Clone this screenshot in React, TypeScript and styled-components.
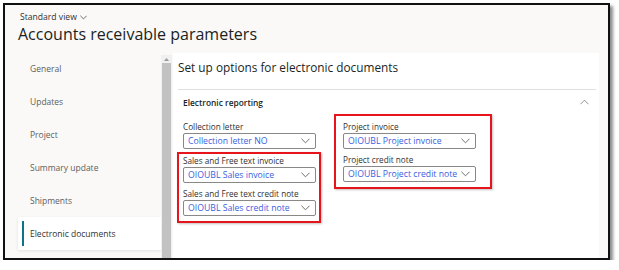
import React from "react";
import styled, { createGlobalStyle } from "styled-components";

const Global = createGlobalStyle`
  html, body { margin: 0; padding: 0; background: #ffffff; }
  body { font-family: "Open Sans", "Noto Sans", sans-serif; color: #323130; }
  * { box-sizing: border-box; }
`;

const Frame = styled.div`
  margin: 3px 0 0 3px;
  width: 607px;
  height: 257px;
  border: 2px solid #111;
  background: #faf9f8;
  box-shadow: 3px 3px 3px rgba(0, 0, 0, 0.45);
  display: flex;
  flex-direction: column;
  overflow: hidden;
`;

const Header = styled.div`
  height: 47px;
  padding: 6px 0 0 13px;
  display: flex;
  flex-direction: column;
`;

const ViewPicker = styled.div`
  display: flex;
  align-items: center;
  gap: 3px;
  padding-left: 2px;
  font-size: 8.6px;
  line-height: 12px;
  color: #323130;
`;

const PageTitle = styled.h1`
  margin: 0;
  font-size: 16px;
  line-height: 22px;
  font-weight: 400;
  color: #201f1e;
`;

const Body = styled.div`
  flex: 1;
  display: flex;
  min-height: 0;
`;

const Nav = styled.nav`
  width: 156px;
  padding-left: 13px;
  display: flex;
  flex-direction: column;
`;

const NavItem = styled.div<{ $active?: boolean }>`
  height: 33px;
  display: flex;
  align-items: center;
  padding-left: 4px;
  gap: 6px;
  font-size: 8.5px;
  color: ${(p) => (p.$active ? "#323130" : "#605e5c")};
  background: ${(p) => (p.$active ? "#ffffff" : "transparent")};
  box-shadow: ${(p) => (p.$active ? "0 1px 3px rgba(0,0,0,0.10)" : "none")};
`;

const NavBar = styled.span<{ $active?: boolean }>`
  width: 2px;
  height: 25px;
  background: ${(p) => (p.$active ? "#0e7387" : "transparent")};
`;

const Scroll = styled.div`
  width: 11px;
  margin-top: 3px;
  display: flex;
  flex-direction: column;
  background: #f0f0f0;
`;

const ScrollArrow = styled.div`
  height: 8px;
  display: flex;
  align-items: center;
  justify-content: center;
`;

const ScrollThumb = styled.div`
  flex: 1;
  margin: 0 1px;
  background: #c2c2c2;
`;

const Content = styled.main`
  width: 426px;
  margin: 1px 0 0 1px;
  background: #ffffff;
  padding: 4px 3px 0 5px;
  display: flex;
  flex-direction: column;
`;

const SectionTitle = styled.h2`
  margin: 0;
  font-size: 11.8px;
  line-height: 20px;
  font-weight: 400;
  color: #201f1e;
`;

const Divider = styled.div`
  margin-top: 12px;
  height: 1px;
  background: #e1dfdd;
`;

const GroupHeader = styled.div`
  margin-top: 5px;
  padding: 0 7px 0 5px;
  height: 14px;
  display: flex;
  align-items: center;
  justify-content: space-between;
  font-size: 8.4px;
  font-weight: 600;
  color: #201f1e;
`;

const Columns = styled.div`
  margin-top: 5px;
  padding-left: 5px;
  display: flex;
  gap: 27px;
  align-items: flex-start;
`;

const Column = styled.div<{ $pad?: number }>`
  width: 133px;
  padding-top: ${(p) => p.$pad ?? 0}px;
  display: flex;
  flex-direction: column;
`;

const Highlight = styled.div<{ $ml: number; $pt: number; $pl: number; $pr: number; $mt?: number }>`
  margin-left: ${(p) => p.$ml}px;
  margin-top: ${(p) => p.$mt ?? 0}px;
  width: ${(p) => 133 + p.$pl + p.$pr + 4}px;
  border: 2px solid #e8141b;
  padding: ${(p) => p.$pt}px ${(p) => p.$pr}px 5px ${(p) => p.$pl}px;
  box-shadow: 1px 1px 2px rgba(0, 0, 0, 0.25);
  display: flex;
  flex-direction: column;
  gap: 4px;
`;

const Field = styled.div`
  display: flex;
  flex-direction: column;
`;

const Label = styled.div`
  font-size: 8.2px;
  line-height: 13px;
  color: #323130;
  white-space: nowrap;
`;

const Select = styled.div`
  height: 16px;
  border: 1px solid #8a8886;
  border-radius: 2px;
  display: flex;
  align-items: center;
  justify-content: space-between;
  padding: 0 5px 0 4px;
  font-size: 8.7px;
  color: #3b5ee0;
  white-space: nowrap;
  background: #fff;
`;

const Chevron = ({ up, color = "#605e5c", w = 9 }: { up?: boolean; color?: string; w?: number }) => (
  <svg width={w} height={Math.round(w / 2) + 1} viewBox="0 0 10 6" fill="none">
    <path
      d={up ? "M0.5 5.5 L5 1 L9.5 5.5" : "M0.5 0.5 L5 5 L9.5 0.5"}
      stroke={color}
      strokeWidth="1"
    />
  </svg>
);

const SelectField = ({ label, value }: { label: string; value: string }) => (
  <Field>
    <Label>{label}</Label>
    <Select>
      <span>{value}</span>
      <Chevron />
    </Select>
  </Field>
);

const navItems = [
  "General",
  "Updates",
  "Project",
  "Summary update",
  "Shipments",
  "Electronic documents",
];

export default function App() {
  return (
    <>
      <Global />
      <Frame>
        <Header>
          <ViewPicker>
            Standard view <Chevron w={7} color="#323130" />
          </ViewPicker>
          <PageTitle>Accounts receivable parameters</PageTitle>
        </Header>
        <Body>
          <Nav>
            {navItems.map((n, i) => {
              const active = i === navItems.length - 1;
              return (
                <NavItem key={n} $active={active}>
                  <NavBar $active={active} />
                  {n}
                </NavItem>
              );
            })}
          </Nav>
          <Scroll>
            <ScrollArrow>
              <svg width="5" height="3" viewBox="0 0 5 3">
                <path d="M0 3 L2.5 0 L5 3 Z" fill="#9a9a9a" />
              </svg>
            </ScrollArrow>
            <ScrollThumb />
          </Scroll>
          <Content>
            <SectionTitle>Set up options for electronic documents</SectionTitle>
            <Divider />
            <GroupHeader>
              Electronic reporting
              <Chevron up w={9} color="#8a8886" />
            </GroupHeader>
            <Columns>
              <Column $pad={6}>
                <SelectField label="Collection letter" value="Collection letter NO" />
                <Highlight $ml={-6} $mt={3} $pt={0} $pl={4} $pr={3}>
                  <SelectField label="Sales and Free text invoice" value="OIOUBL Sales invoice" />
                  <SelectField label="Sales and Free text credit note" value="OIOUBL Sales credit note" />
                </Highlight>
              </Column>
              <Column>
                <Highlight $ml={-9} $pt={4} $pl={7} $pr={14}>
                  <SelectField label="Project invoice" value="OIOUBL Project invoice" />
                  <SelectField label="Project credit note" value="OIOUBL Project credit note" />
                </Highlight>
              </Column>
            </Columns>
          </Content>
        </Body>
      </Frame>
    </>
  );
}
